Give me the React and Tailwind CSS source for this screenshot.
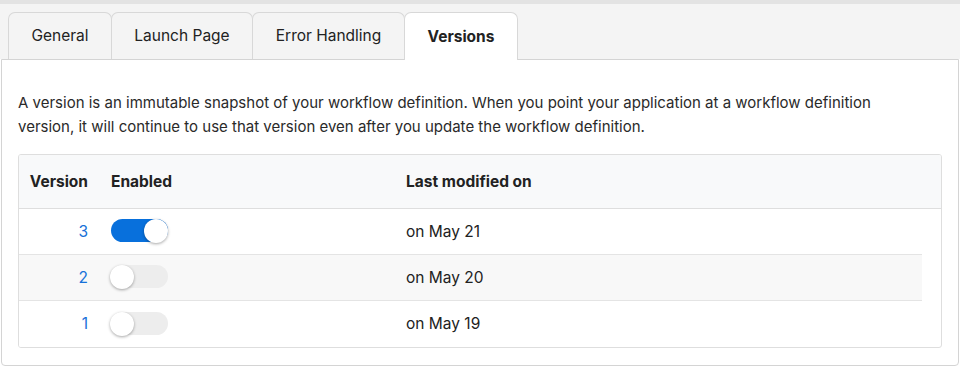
import React from "react";

const tabs = ["General", "Launch Page", "Error Handling", "Versions"];
const tabWidths = ["w-[104px]", "w-[142px]", "w-[153px]", "w-[114px]"];

const versions = [
  { num: 3, enabled: true, date: "on May 21" },
  { num: 2, enabled: false, date: "on May 20" },
  { num: 1, enabled: false, date: "on May 19" },
];

function Toggle({ on }) {
  return (
    <div
      className={`relative h-[23px] w-[57px] rounded-full ${
        on ? "bg-[#0870dc]" : "bg-[#ededed]"
      }`}
    >
      <div
        className={`absolute top-0 h-[24px] w-[24px] rounded-full bg-white shadow-[0_1px_3px_rgba(0,0,0,0.35)] ${
          on ? "right-0" : "left-[-1px]"
        }`}
      ></div>
    </div>
  );
}

export default function App() {
  return (
    <div
      className="w-[968px] h-[371px] bg-white text-[#222] overflow-hidden"
      style={{ fontFamily: "Inter, 'Liberation Sans', sans-serif" }}
    >
      <div className="w-[960px]">
        {/* Top strip + tab bar */}
        <div className="h-[4px] bg-[#e3e3e3]"></div>
        <div className="bg-[#f4f4f4] pt-[8px] pl-[8px] flex">
          {tabs.map((tab, i) => {
            const active = tab === "Versions";
            return (
              <div
                key={tab}
                className={`${tabWidths[i]} h-[47px] flex items-center justify-center rounded-t-[7px] border border-b-0 border-[#d8d8d8] text-[15.5px] ${
                  active ? "bg-white font-bold relative z-10 -mb-px h-[48px]" : "bg-[#f4f4f4]"
                } ${i > 0 ? "-ml-px" : ""}`}
              >
                {tab}
              </div>
            );
          })}
        </div>

        {/* Panel */}
        <div className="ml-px w-[958px] h-[307px] border border-[#d4d4d4] rounded-b-[4px] bg-white px-[16px] pt-[31px]">
          <p className="text-[15px] leading-[24px] text-[#2a2a2a] pr-[50px]">
            A version is an immutable snapshot of your workflow definition. When you point your application at a workflow definition
            version, it will continue to use that version even after you update the workflow definition.
          </p>

          {/* Table */}
          <div className="mt-[15px] border border-[#dedede] rounded-[3px] overflow-hidden">
            <div className="h-[54px] flex items-center bg-[#f8f9fa] border-b border-[#dedede] text-[15.5px] font-bold text-[#222]">
              <div className="w-[69px] text-right">Version</div>
              <div className="ml-[23px] w-[295px]">Enabled</div>
              <div>Last modified on</div>
            </div>
            <div className="w-[903px]">
              {versions.map((v, i) => (
                <div
                  key={v.num}
                  className={`flex items-center text-[15.5px] ${
                    i < versions.length - 1 ? "h-[46px] border-b border-[#e4e4e4]" : "h-[46px]"
                  } ${i === 1 ? "bg-[#f8f8f8]" : "bg-white"}`}
                >
                  <div className="w-[69px] text-right text-[#1771d8]">{v.num}</div>
                  <div className="ml-[23px] w-[295px] pb-[2px]">
                    <Toggle on={v.enabled} />
                  </div>
                  <div className="text-[#222]">{v.date}</div>
                </div>
              ))}
            </div>
          </div>
        </div>
      </div>
    </div>
  );
}
